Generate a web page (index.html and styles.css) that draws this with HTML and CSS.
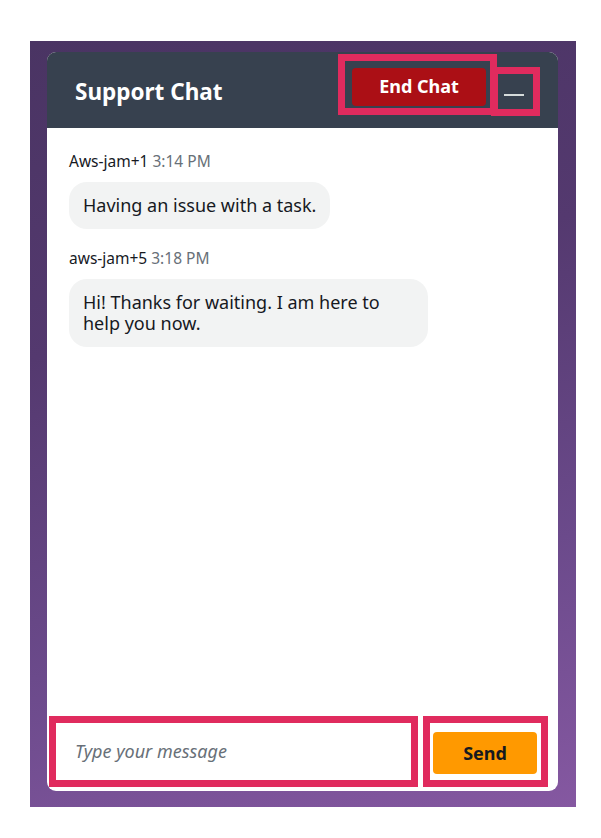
FILE: index.html
```html
<!DOCTYPE html>
<html lang="en">
<head>
<meta charset="utf-8">
<title>Support Chat</title>
<link rel="stylesheet" href="styles.css">
</head>
<body>
<div class="stage">
  <div class="chat">
    <header class="chat-header">
      <h1 class="chat-title">Support Chat</h1>
      <div class="hl hl-end">
        <button class="btn-end" type="button">End Chat</button>
      </div>
      <div class="hl hl-min">
        <button class="btn-min" type="button" aria-label="Minimize"><span class="dash"></span></button>
      </div>
    </header>
    <main class="messages">
      <div class="msg">
        <div class="msg-meta"><span class="msg-name">Aws-jam+1</span> <span class="msg-time">3:14 PM</span></div>
        <div class="bubble">Having an issue with a task.</div>
      </div>
      <div class="msg">
        <div class="msg-meta"><span class="msg-name">aws-jam+5</span> <span class="msg-time">3:18 PM</span></div>
        <div class="bubble">Hi! Thanks for waiting. I am here to help you now.</div>
      </div>
    </main>
    <footer class="chat-footer">
      <div class="hl hl-input">
        <input class="msg-input" type="text" placeholder="Type your message">
      </div>
      <div class="hl hl-send">
        <button class="btn-send" type="button">Send</button>
      </div>
    </footer>
  </div>
</div>
</body>
</html>
```
FILE: styles.css
```css
* { box-sizing: border-box; }

html, body {
  margin: 0;
  padding: 0;
  background: #ffffff;
}

body {
  font-family: "Noto Sans", "Open Sans", sans-serif;
  color: #16191f;
}

.stage {
  width: 546px;
  height: 766px;
  margin: 41px 0 0 30px;
  padding: 11px 18px 16px 17px;
  background: linear-gradient(165deg, #4a3463 0%, #54396f 35%, #6b4a8b 70%, #8558a1 100%);
}

.chat {
  height: 100%;
  background: #ffffff;
  border-radius: 9px;
  overflow: hidden;
  display: flex;
  flex-direction: column;
}

.chat-header {
  height: 76px;
  flex: none;
  background: #37414f;
  display: flex;
  align-items: flex-start;
  padding: 2px 18px 0 28px;
}

.chat-title {
  margin: 0;
  align-self: center;
  flex: 1;
  font-size: 22.5px;
  font-weight: 700;
  color: #ffffff;
  line-height: 30px;
  padding-top: 2px;
}

.hl {
  border: 7px solid #e02b5e;
}

.hl-end {
  padding: 7px 4px 2px 7px;
}

.btn-end {
  display: block;
  width: 134px;
  height: 38px;
  border: 0;
  border-radius: 4px;
  background: #ab0f15;
  color: #ffffff;
  font-family: inherit;
  font-size: 18px;
  font-weight: 700;
  padding: 0 0 2px;
}

.hl-min {
  margin-top: 13px;
  margin-left: -6px;
  width: 49px;
  height: 49px;
}

.btn-min {
  width: 100%;
  height: 100%;
  border: 0;
  background: transparent;
  display: flex;
  align-items: center;
  justify-content: center;
  padding: 7px 4px 0 0;
}

.dash {
  display: block;
  width: 20px;
  height: 2px;
  background: #d5dbdb;
}

.messages {
  flex: 1;
  padding: 24px 22px 0 22px;
}

.msg + .msg {
  margin-top: 20px;
}

.msg-meta {
  font-size: 15.5px;
  line-height: 18px;
  margin-bottom: 12px;
}

.msg-name {
  color: #16191f;
}

.msg-time {
  color: #687078;
}

.bubble {
  display: inline-block;
  max-width: 359px;
  background: #f2f3f3;
  border-radius: 18px;
  padding: 13px 14px 13px;
  font-size: 18px;
  line-height: 21px;
  color: #16191f;
}

.chat-footer {
  height: 75px;
  flex: none;
  display: flex;
  gap: 5px;
  padding: 0 10px 4px 2px;
}

.hl-input {
  flex: 1;
  display: flex;
}

.msg-input {
  flex: 1;
  border: 0;
  outline: none;
  background: #ffffff;
  padding: 0 0 2px 19px;
  font-family: inherit;
  font-size: 18px;
  color: #16191f;
}

.msg-input::placeholder {
  color: #687078;
  font-style: italic;
}

.hl-send {
  width: 125px;
  padding: 9px 4px 6px 3px;
}

.btn-send {
  display: block;
  width: 100%;
  height: 100%;
  border: 0;
  border-radius: 4px;
  background: #ff9900;
  color: #16191f;
  font-family: inherit;
  font-size: 18px;
  font-weight: 700;
  padding: 0;
}
```
